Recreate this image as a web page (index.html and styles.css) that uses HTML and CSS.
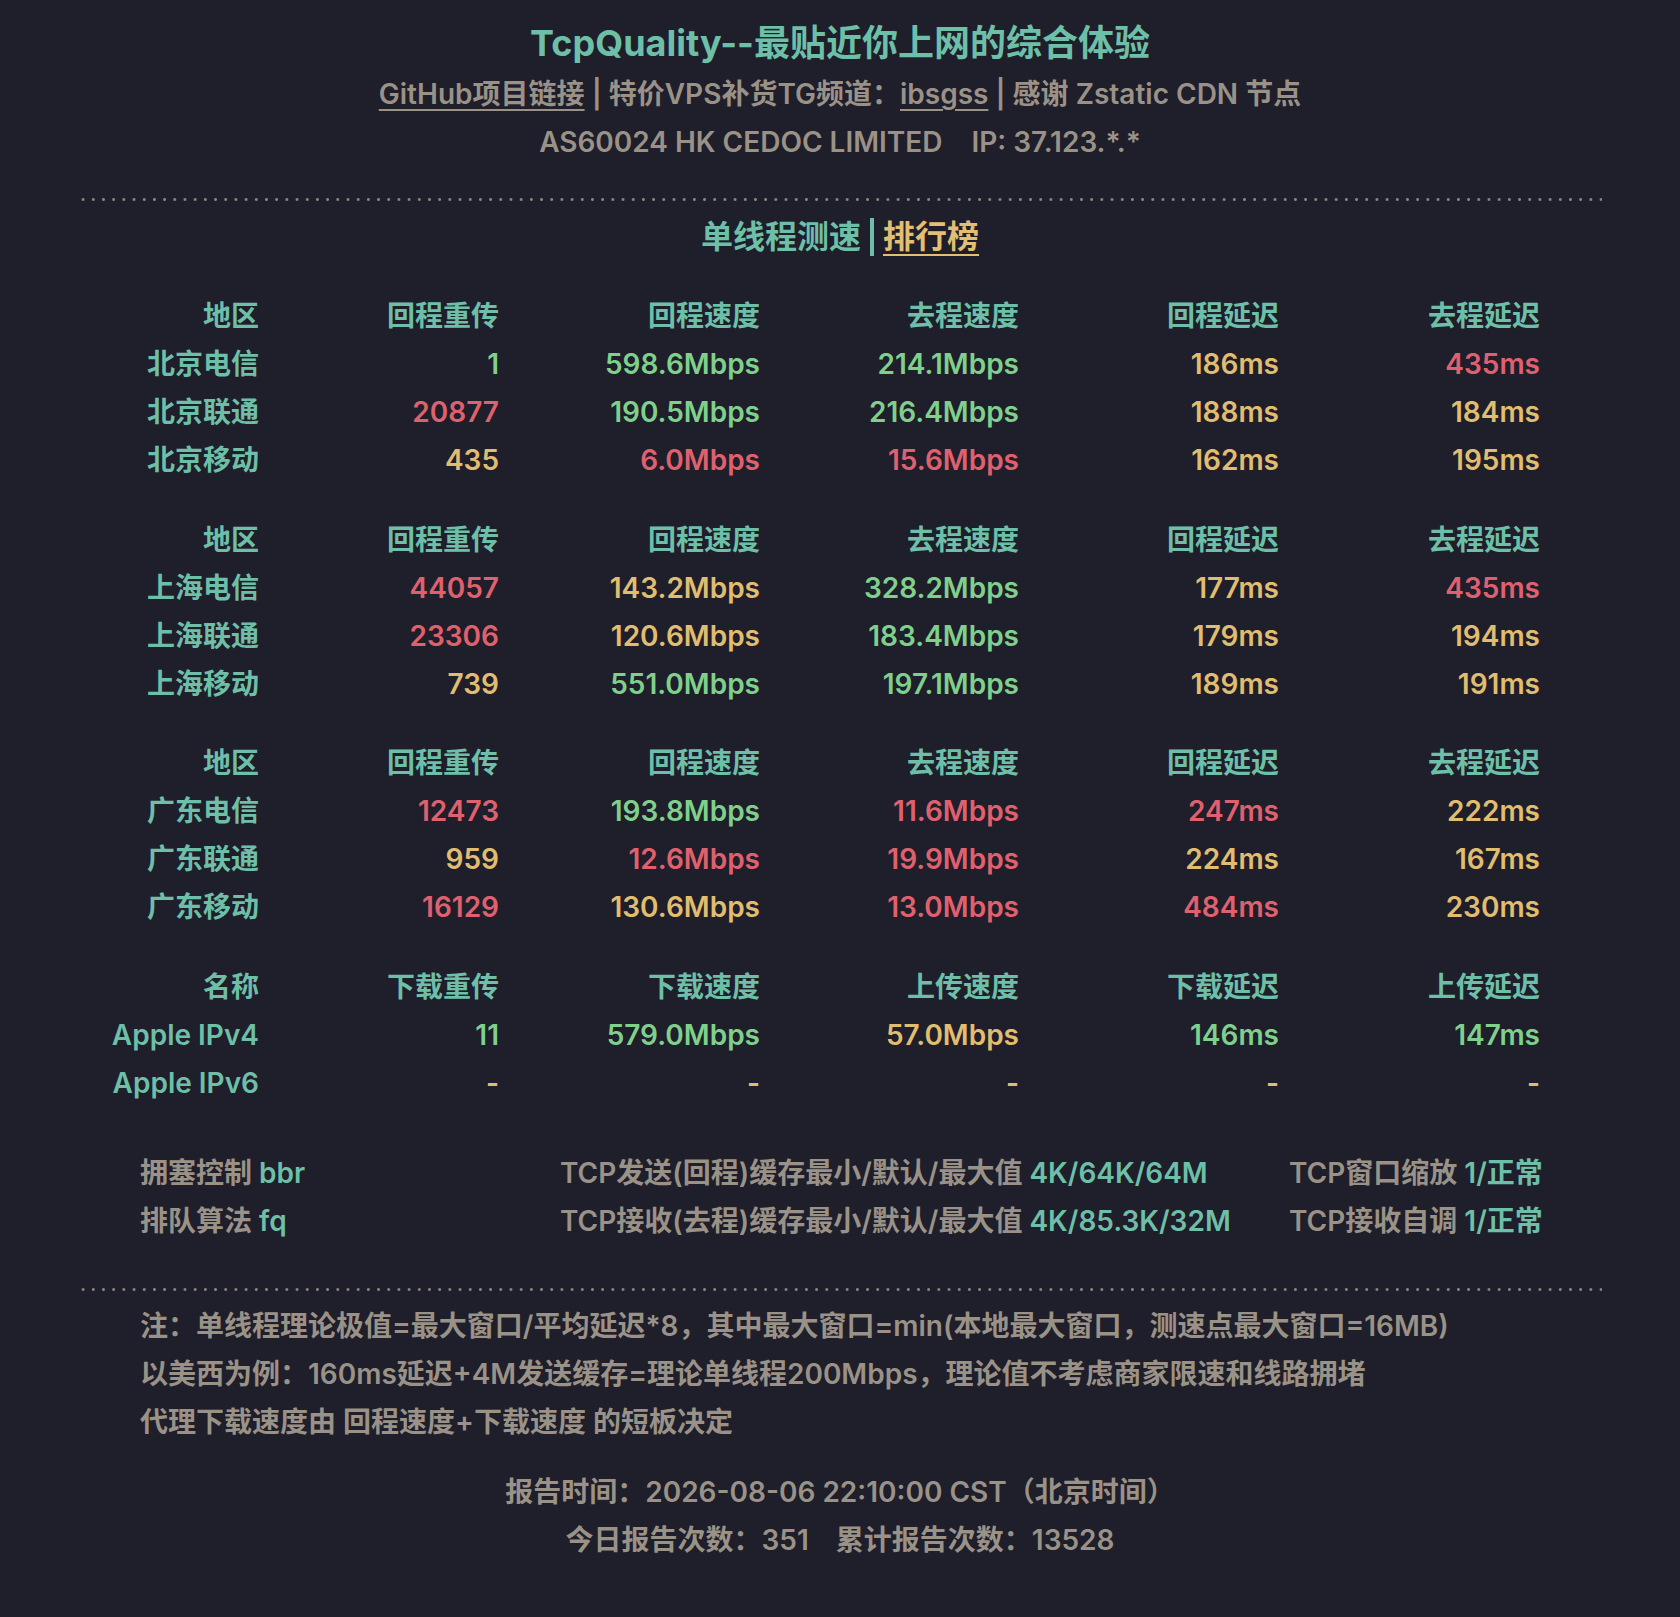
FILE: index.html
```html
<!DOCTYPE html>
<html lang="zh-CN">
<head>
<meta charset="utf-8">
<title>TcpQuality</title>
<link rel="stylesheet" href="styles.css">
</head>
<body>
<div class="page">
  <header class="head">
    <h1 class="title">TcpQuality--最贴近你上网的综合体验</h1>
    <p class="links"><a class="ul" href="#">GitHub项目链接</a> <span class="bar">|</span> 特价VPS补货TG频道：<a class="ul" href="#">ibsgss</a> <span class="bar">|</span> 感谢 Zstatic CDN 节点</p>
    <p class="asn">AS60024 HK CEDOC LIMITED<span class="ip">IP: 37.123.*.*</span></p>
  </header>

  <div class="dots"></div>

  <h2 class="section"><span>单线程测速</span><span class="sbar"></span><a class="rank" href="#">排行榜</a></h2>

  <div class="grid">
    <div class="h">地区</div><div class="h">回程重传</div><div class="h">回程速度</div><div class="h">去程速度</div><div class="h">回程延迟</div><div class="h">去程延迟</div>
    <div class="n">北京电信</div><div class="g">1</div><div class="g">598.6Mbps</div><div class="g">214.1Mbps</div><div class="y">186ms</div><div class="r">435ms</div>
    <div class="n">北京联通</div><div class="r">20877</div><div class="g">190.5Mbps</div><div class="g">216.4Mbps</div><div class="y">188ms</div><div class="y">184ms</div>
    <div class="n">北京移动</div><div class="y">435</div><div class="r">6.0Mbps</div><div class="r">15.6Mbps</div><div class="y">162ms</div><div class="y">195ms</div>
  </div>

  <div class="grid">
    <div class="h">地区</div><div class="h">回程重传</div><div class="h">回程速度</div><div class="h">去程速度</div><div class="h">回程延迟</div><div class="h">去程延迟</div>
    <div class="n">上海电信</div><div class="r">44057</div><div class="y">143.2Mbps</div><div class="g">328.2Mbps</div><div class="y">177ms</div><div class="r">435ms</div>
    <div class="n">上海联通</div><div class="r">23306</div><div class="y">120.6Mbps</div><div class="g">183.4Mbps</div><div class="y">179ms</div><div class="y">194ms</div>
    <div class="n">上海移动</div><div class="y">739</div><div class="g">551.0Mbps</div><div class="g">197.1Mbps</div><div class="y">189ms</div><div class="y">191ms</div>
  </div>

  <div class="grid">
    <div class="h">地区</div><div class="h">回程重传</div><div class="h">回程速度</div><div class="h">去程速度</div><div class="h">回程延迟</div><div class="h">去程延迟</div>
    <div class="n">广东电信</div><div class="r">12473</div><div class="g">193.8Mbps</div><div class="r">11.6Mbps</div><div class="r">247ms</div><div class="y">222ms</div>
    <div class="n">广东联通</div><div class="y">959</div><div class="r">12.6Mbps</div><div class="r">19.9Mbps</div><div class="y">224ms</div><div class="y">167ms</div>
    <div class="n">广东移动</div><div class="r">16129</div><div class="y">130.6Mbps</div><div class="r">13.0Mbps</div><div class="r">484ms</div><div class="y">230ms</div>
  </div>

  <div class="grid">
    <div class="h">名称</div><div class="h">下载重传</div><div class="h">下载速度</div><div class="h">上传速度</div><div class="h">下载延迟</div><div class="h">上传延迟</div>
    <div class="n">Apple IPv4</div><div class="g">11</div><div class="g">579.0Mbps</div><div class="y">57.0Mbps</div><div class="g">146ms</div><div class="g">147ms</div>
    <div class="n">Apple IPv6</div><div class="y">-</div><div class="y">-</div><div class="y">-</div><div class="y">-</div><div class="y">-</div>
  </div>

  <div class="tcp">
    <div>拥塞控制 <span class="v">bbr</span></div>
    <div>TCP发送(回程)缓存最小/默认/最大值 <span class="v">4K/64K/64M</span></div>
    <div>TCP窗口缩放 <span class="v">1/正常</span></div>
    <div>排队算法 <span class="v">fq</span></div>
    <div>TCP接收(去程)缓存最小/默认/最大值 <span class="v">4K/85.3K/32M</span></div>
    <div>TCP接收自调 <span class="v">1/正常</span></div>
  </div>

  <div class="dots dots2"></div>

  <div class="notes">
    <p>注：单线程理论极值=最大窗口/平均延迟*8，其中最大窗口=min(本地最大窗口，测速点最大窗口=16MB)</p>
    <p>以美西为例：160ms延迟+4M发送缓存=理论单线程200Mbps，理论值不考虑商家限速和线路拥堵</p>
    <p>代理下载速度由 回程速度+下载速度 的短板决定</p>
  </div>

  <footer class="foot">
    <p>报告时间：2026-08-06 22:10:00 CST（北京时间）</p>
    <p>今日报告次数：351<span class="gap">累计报告次数：13528</span></p>
  </footer>
</div>
</body>
</html>
```

FILE: styles.css
```css
html, body {
  margin: 0;
  padding: 0;
  background: #1f1e2b;
}
body {
  font-family: Inter, "Noto Sans CJK SC", sans-serif;
  font-weight: 600;
  color: #9a9287;
  font-size: 28px;
  line-height: 48px;
}
p, h1, h2 { margin: 0; }
.page {
  width: 1524px;
  margin: 0 auto;
  padding-top: 19px;
  padding-bottom: 50px;
}
.head { text-align: center; }
.title {
  font-size: 36px;
  line-height: 48px;
  font-weight: 650;
  color: #6dbfa7;
  margin-bottom: 3px;
}
.links a { color: #9a9287; }
.ul {
  text-decoration: underline;
  text-underline-offset: 5px;
  text-decoration-thickness: 2px;
}
.bar { color: #9a9287; }
.ip { margin-left: 29px; }
.dots {
  height: 3px;
  margin-top: 31.5px;
  background-image: radial-gradient(circle at center, #8d867b 1.2px, transparent 1.6px);
  background-size: 10.2px 3px;
  background-repeat: repeat-x;
}
.section {
  margin-top: 12px;
  font-size: 32px;
  line-height: 48px;
  font-weight: 600;
  color: #6dbfa7;
  display: flex;
  justify-content: center;
  align-items: center;
  gap: 9px;
}
.sbar {
  width: 4px;
  height: 38px;
  background: #6dbfa7;
}
.rank {
  color: #e2bf72;
  text-decoration: underline;
  text-underline-offset: 6px;
  text-decoration-thickness: 2px;
}
.grid {
  display: grid;
  grid-template-columns: 181px 240px 261px 259px 260px 261px;
  margin-top: 31.5px;
  text-align: right;
}
.h, .n { color: #6dbfa7; }
.g { color: #7fd08b; }
.y { color: #e0bd6f; }
.r { color: #e0616e; }
.tcp {
  display: grid;
  grid-template-columns: 420px 729px auto;
  padding-left: 62px;
  margin-top: 42px;
}
.v { color: #6dbfa7; }
.dots2 { margin-top: 43px; }
.notes {
  padding-left: 62px;
  margin-top: 11px;
}
.foot {
  text-align: center;
  margin-top: 22px;
}
.gap { margin-left: 27px; }
```
